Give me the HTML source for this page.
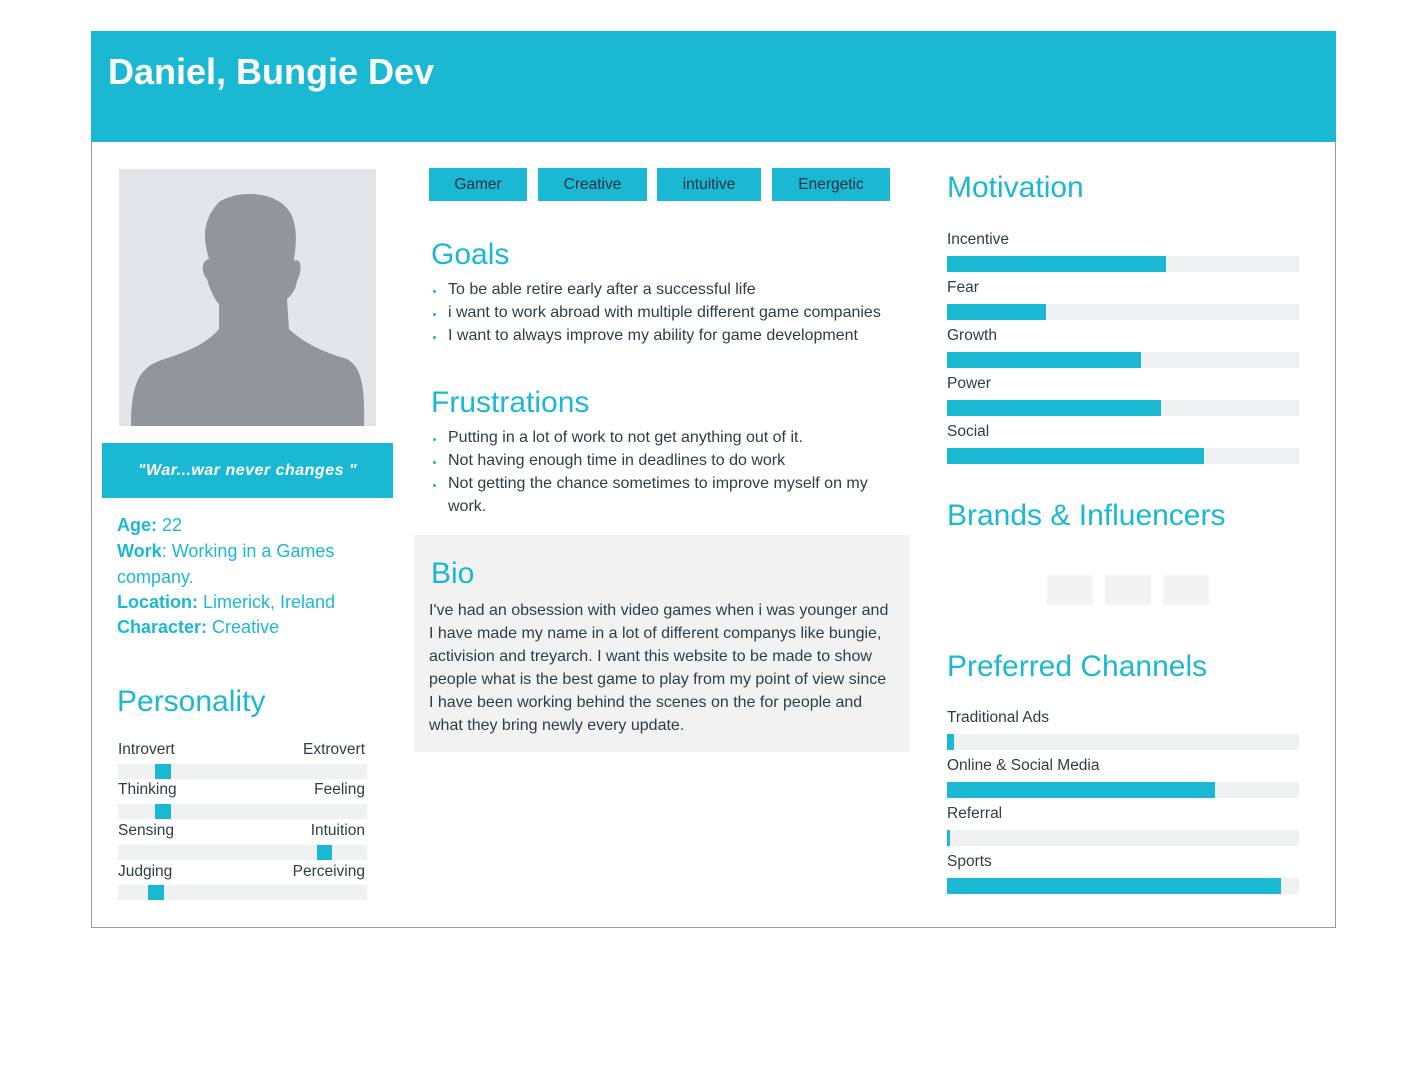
<!DOCTYPE html>
<html><head><meta charset="utf-8"><style>
*{margin:0;padding:0;box-sizing:border-box}
body{width:1427px;height:1069px;background:#fff;font-family:"Liberation Sans",sans-serif;color:#2d3e48;position:relative;overflow:hidden}
.a{position:absolute;white-space:nowrap}
.hdr{left:91px;top:31px;width:1245px;height:111px;background:#1bb8d4}
.card{left:91px;top:141px;width:1245px;height:787px;border:1px solid #9a9a9a;border-top:none}
.h{color:#1bb8d4;font-size:30px}
.t{font-size:15.5px}
.tag{background:#1bb8d4;height:33px;top:168px;font-size:15.5px;text-align:center;line-height:33px;color:#234}
.bar{background:#f0f1f3;height:16px}
.fill{background:#1bb8d4;height:16px;position:absolute;left:0;top:0}
.dot{position:absolute;top:0;width:16px;height:15px;background:#1bb8d4}
.li{font-size:16px}
.li:before{content:"";position:absolute;left:-15px;top:9px;width:3px;height:3px;background:#1bb8d4;border-radius:2px}
.k{color:#1bb8d4;font-size:18px}
.k b{font-weight:bold}
</style></head><body>
<div class="a hdr"></div>
<div class="a" style="left:108px;top:51px;color:#fff;font-size:36px;font-weight:bold">Daniel, Bungie Dev</div>
<div class="a card"></div>

<svg class="a" style="left:119px;top:169px" width="257" height="257" viewBox="0 0 257 257">
<rect width="257" height="257" fill="#e3e5e8"/>
<path d="M100 33 C120 20 160 22 172 45 C180 62 176 80 175 92 C182 88 184 100 178 112 C176 124 170 128 168 130 L170 160 C185 175 210 185 228 190 C242 198 246 215 245 257 L12 257 C12 220 18 200 40 192 C60 185 85 178 100 160 L100 135 C95 130 90 118 88 110 C82 104 82 92 90 90 C86 75 80 55 100 33Z" fill="#939699"/>
</svg>

<div class="a" style="left:102px;top:443px;width:291px;height:55px;background:#1bb8d4;color:#fff;font-style:italic;font-weight:bold;font-size:16px;text-align:center;line-height:55px;letter-spacing:.5px">"War...war never changes "</div>

<div class="a k" style="left:117px;top:515px"><b>Age:</b> 22</div>
<div class="a k" style="left:117px;top:541px"><b>Work</b>: Working in a Games</div>
<div class="a k" style="left:117px;top:567px">company.</div>
<div class="a k" style="left:117px;top:592px"><b>Location:</b> Limerick, Ireland</div>
<div class="a k" style="left:117px;top:617px"><b>Character:</b> Creative</div>

<div class="a h" style="left:117px;top:685px">Personality</div>
<div class="a t" style="left:118px;top:741px">Introvert</div><div class="a t" style="right:1062px;top:741px">Extrovert</div>
<div class="a bar" style="left:118px;top:764px;width:249px;height:15px"><div class="dot" style="left:37px"></div></div>
<div class="a t" style="left:118px;top:781px">Thinking</div><div class="a t" style="right:1062px;top:781px">Feeling</div>
<div class="a bar" style="left:118px;top:804px;width:249px;height:15px"><div class="dot" style="left:37px"></div></div>
<div class="a t" style="left:118px;top:822px">Sensing</div><div class="a t" style="right:1062px;top:822px">Intuition</div>
<div class="a bar" style="left:118px;top:845px;width:249px;height:15px"><div class="dot" style="left:199px;width:15px"></div></div>
<div class="a t" style="left:118px;top:863px">Judging</div><div class="a t" style="right:1062px;top:863px">Perceiving</div>
<div class="a bar" style="left:118px;top:885px;width:249px;height:15px"><div class="dot" style="left:30px"></div></div>

<div class="a tag" style="left:429px;width:98px">Gamer</div>
<div class="a tag" style="left:538px;width:109px">Creative</div>
<div class="a tag" style="left:657px;width:104px">intuitive</div>
<div class="a tag" style="left:772px;width:118px">Energetic</div>

<div class="a h" style="left:431px;top:238px">Goals</div>
<div class="a li" style="left:448px;top:281px">To be able retire early after a successful life</div>
<div class="a li" style="left:448px;top:304px">i want to work abroad with multiple different game companies</div>
<div class="a li" style="left:448px;top:327px">I want to always improve my ability for game development</div>

<div class="a h" style="left:431px;top:386px">Frustrations</div>
<div class="a li" style="left:448px;top:429px">Putting in a lot of work to not get anything out of it.</div>
<div class="a li" style="left:448px;top:452px">Not having enough time in deadlines to do work</div>
<div class="a li" style="left:448px;top:475px">Not getting the chance sometimes to improve myself on my</div>
<div class="a" style="left:448px;top:498px;font-size:16px">work.</div>

<div class="a" style="left:414px;top:535px;width:496px;height:217px;background:#f2f2f3"></div>
<div class="a h" style="left:431px;top:557px">Bio</div>
<div class="a" style="left:429px;top:599px;line-height:23px;font-size:16px">I've had an obsession with video games when i was younger and<br>I have made my name in a lot of different companys like bungie,<br>activision and treyarch. I want this website to be made to show<br>people what is the best game to play from my point of view since<br>I have been working behind the scenes on the for people and<br>what they bring newly every update.</div>

<div class="a h" style="left:947px;top:171px">Motivation</div>
<div class="a t" style="left:947px;top:231px">Incentive</div>
<div class="a bar" style="left:947px;top:256px;width:352px"><div class="fill" style="width:219px"></div></div>
<div class="a t" style="left:947px;top:279px">Fear</div>
<div class="a bar" style="left:947px;top:304px;width:352px"><div class="fill" style="width:99px"></div></div>
<div class="a t" style="left:947px;top:327px">Growth</div>
<div class="a bar" style="left:947px;top:352px;width:352px"><div class="fill" style="width:194px"></div></div>
<div class="a t" style="left:947px;top:375px">Power</div>
<div class="a bar" style="left:947px;top:400px;width:352px"><div class="fill" style="width:214px"></div></div>
<div class="a t" style="left:947px;top:423px">Social</div>
<div class="a bar" style="left:947px;top:448px;width:352px"><div class="fill" style="width:257px"></div></div>

<div class="a h" style="left:947px;top:499px">Brands &amp; Influencers</div>
<div class="a" style="left:1047px;top:575px;width:46px;height:30px;background:#f3f3f3"></div>
<div class="a" style="left:1105px;top:575px;width:46px;height:30px;background:#f3f3f3"></div>
<div class="a" style="left:1163px;top:575px;width:46px;height:30px;background:#f3f3f3"></div>

<div class="a h" style="left:947px;top:650px">Preferred Channels</div>
<div class="a t" style="left:947px;top:709px">Traditional Ads</div>
<div class="a bar" style="left:947px;top:734px;width:352px"><div class="fill" style="width:7px"></div></div>
<div class="a t" style="left:947px;top:757px">Online &amp; Social Media</div>
<div class="a bar" style="left:947px;top:782px;width:352px"><div class="fill" style="width:268px"></div></div>
<div class="a t" style="left:947px;top:805px">Referral</div>
<div class="a bar" style="left:947px;top:830px;width:352px"><div class="fill" style="width:3px"></div></div>
<div class="a t" style="left:947px;top:853px">Sports</div>
<div class="a bar" style="left:947px;top:878px;width:352px"><div class="fill" style="width:334px"></div></div>
</body></html>
